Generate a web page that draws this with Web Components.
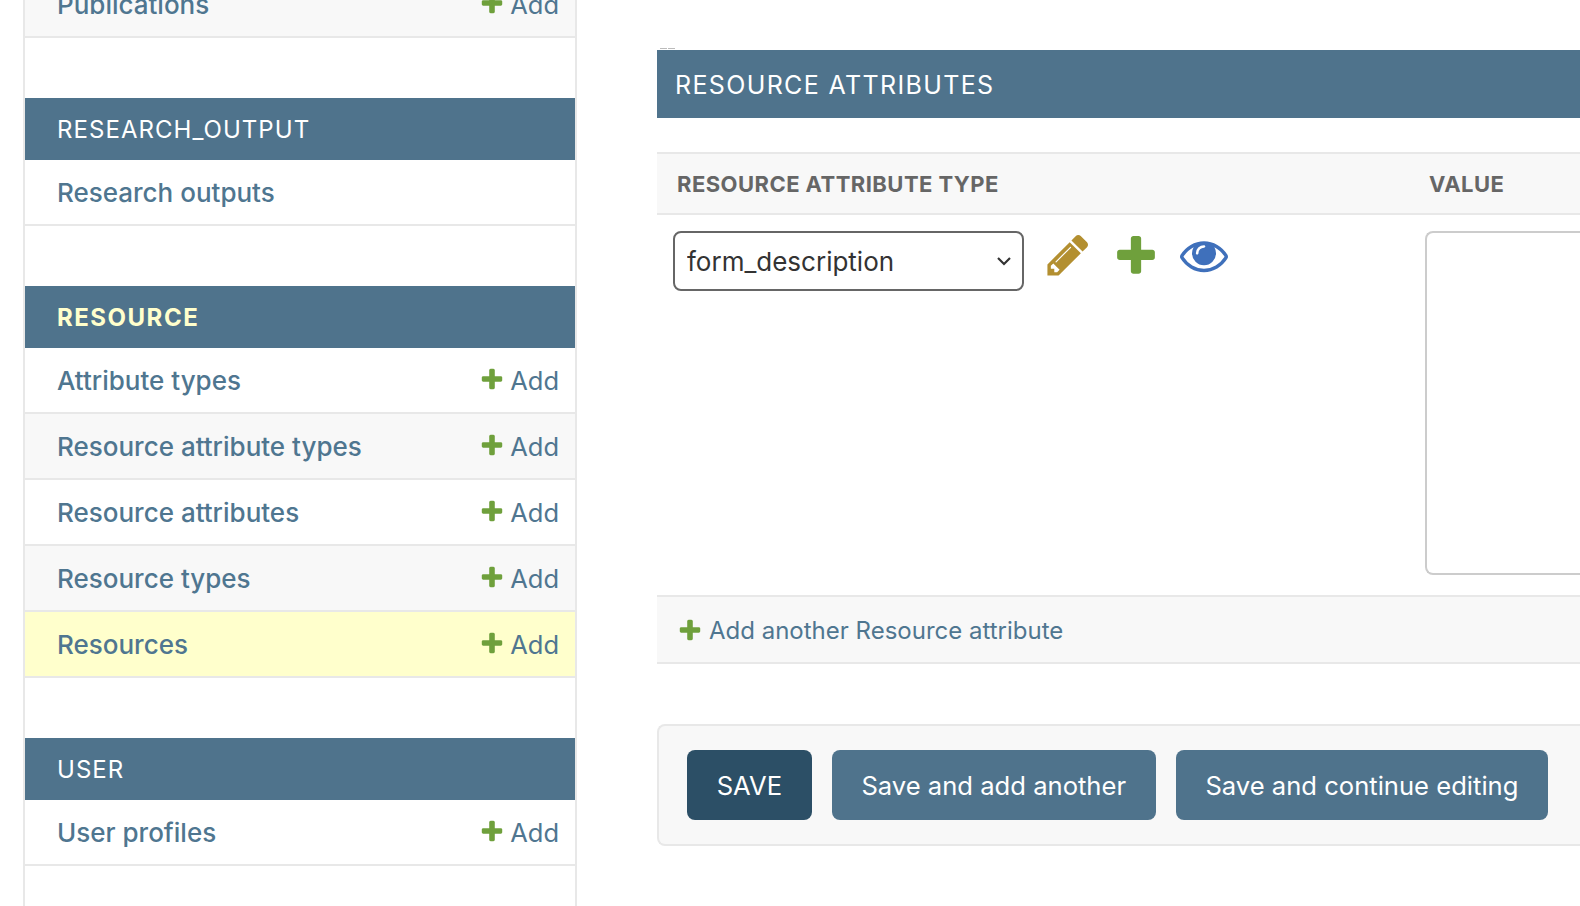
<!DOCTYPE html>
<html lang="en">
<head>
<meta charset="utf-8">
<title>Add resource</title>
<style>
  html, body { margin: 0; height: 906px; overflow: hidden; background: #fff; }
  body { font-family: Inter, "Liberation Sans", sans-serif; color: #333; }
</style>
</head>
<body>

<admin-page>
  <admin-sidebar slot="nav">
    <app-group clipped>
      <model-row name="Publications" add alt></model-row>
    </app-group>
    <app-group caption="RESEARCH_OUTPUT">
      <model-row name="Research outputs"></model-row>
    </app-group>
    <app-group caption="RESOURCE" current>
      <model-row name="Attribute types" add></model-row>
      <model-row name="Resource attribute types" add alt></model-row>
      <model-row name="Resource attributes" add></model-row>
      <model-row name="Resource types" add alt></model-row>
      <model-row name="Resources" add current></model-row>
    </app-group>
    <app-group caption="USER">
      <model-row name="User profiles" add></model-row>
    </app-group>
  </admin-sidebar>

  <inline-group caption="RESOURCE ATTRIBUTES" add-label="Add another Resource attribute">
    <attribute-row value="form_description"></attribute-row>
  </inline-group>

  <submit-row>
    <save-button primary>SAVE</save-button>
    <save-button>Save and add another</save-button>
    <save-button>Save and continue editing</save-button>
  </submit-row>
</admin-page>

<script>
const ICONS = {
  plus: 'M1600 796v192q0 40-28 68t-68 28h-416v416q0 40-28 68t-68 28h-192q-40 0-68-28t-28-68v-416h-416q-40 0-68-28t-28-68v-192q0-40 28-68t68-28h416v-416q0-40 28-68t68-28h192q40 0 68 28t28 68v416h416q40 0 68 28t28 68z',
  pencil: 'M491 1536l91-91-235-235-91 91v107h128v128h107zm523-928q0-22-22-22-10 0-17 7l-542 542q-7 7-7 17 0 22 22 22 10 0 17-7l542-542q7-7 7-17zm-54-192l416 416-832 832h-416v-416zm683 96q0 53-37 90l-166 166-416-416 166-165q36-38 90-38 53 0 91 38l235 234q37 39 37 91z',
  eye: 'M1664 960q-152-236-381-353 61 104 61 225 0 185-131.500 316.500t-316.500 131.500-316.500-131.500-131.500-316.500q0-121 61-225-229 117-381 353 133 205 333.500 326.500t434.500 121.500 434.500-121.500 333.500-326.500zm-720-384q0-20-14-34t-34-14q-125 0-214.500 89.500t-89.500 214.500q0 20 14 34t34 14 34-14 14-34q0-86 61-147t147-61q20 0 34-14t14-34zm848 384q0 34-20 69-140 230-376.500 368.500t-499.500 138.500-499.500-139-376.500-368q-20-35-20-69t20-69q140-229 376.500-368t499.500-139 499.500 139 376.500 368q20 35 20 69z'
};

const icon = (name, size, color) =>
  `<svg width="${size}" height="${size}" viewBox="0 0 1792 1792" style="display:block;flex:none"><path fill="${color}" d="${ICONS[name]}"/></svg>`;

class AdminPage extends HTMLElement {
  constructor() {
    super();
    this.attachShadow({ mode: 'open' }).innerHTML = `
      <style>
        :host { display: flex; height: 906px; overflow: hidden; padding-left: 23px; box-sizing: border-box; }
        .nav { flex: none; }
        .content { flex: 1; min-width: 0; margin-left: 80px; padding-top: 48px; }
      </style>
      <div class="nav"><slot name="nav"></slot></div>
      <div class="content"><slot></slot></div>
    `;
  }
}

class AdminSidebar extends HTMLElement {
  constructor() {
    super();
    this.attachShadow({ mode: 'open' }).innerHTML = `
      <style>
        :host { display: block; width: 550px; height: 934px; margin-top: -28px;
                border: solid #e8e8e8; border-width: 0 2px; }
      </style>
      <slot></slot>
    `;
  }
}

class AppGroup extends HTMLElement {
  constructor() {
    super();
    const cap = this.getAttribute('caption');
    const color = this.hasAttribute('current') ? '#ffffcc' : '#fff';
    const weight = this.hasAttribute('current') ? 700 : 400;
    const spacing = this.hasAttribute('current') ? 1.5 : 1.05;
    this.attachShadow({ mode: 'open' }).innerHTML = `
      <style>
        :host { display: block; margin-bottom: 60px; }
        .cap { height: 62px; box-sizing: border-box; padding: 0 32px; display: flex; align-items: center;
               background: #4f738c; color: ${color}; font-size: 24px; font-weight: ${weight}; letter-spacing: ${spacing}px; }
      </style>
      ${cap ? `<div class="cap">${cap}</div>` : ''}
      <slot></slot>
    `;
  }
}

class ModelRow extends HTMLElement {
  constructor() {
    super();
    const add = this.hasAttribute('add') ? `<span class="add">${icon('plus', 26, '#6fa03c')}<span>Add</span></span>` : '';
    this.attachShadow({ mode: 'open' }).innerHTML = `
      <style>
        :host { display: flex; align-items: center; justify-content: space-between; height: 66px; box-sizing: border-box;
                border-bottom: 2px solid #e8e8e8; padding: 1px 16px 0 32px;
                font-size: 26px; font-weight: 500; color: #4f7690; background: #fff; }
        :host([alt]) { background: #f8f8f8; }
        :host([current]) { background: #ffffcc; }
        .add { display: flex; align-items: center; gap: 5px; font-size: 25.5px; font-weight: 400; }
        svg { margin-top: -3px; }
      </style>
      <span class="name">${this.getAttribute('name')}</span>${add}
    `;
  }
}

class InlineGroup extends HTMLElement {
  constructor() {
    super();
    this.attachShadow({ mode: 'open' }).innerHTML = `
      <style>
        :host { display: block; }
        .marks { display: flex; gap: 1px; height: 1px; margin: 0 0 1px 3px; }
        .marks i { width: 7px; background: #bbb; }
        h2 { margin: 0; height: 68px; box-sizing: border-box; padding: 2px 18px 0; display: flex; align-items: center;
             background: #4f738c; color: #fff; font-size: 25px; font-weight: 400; letter-spacing: 1.36px; }
        .head { display: grid; grid-template-columns: 753px 1fr; height: 63px; margin-top: 34px; box-sizing: border-box;
                border: solid #e8e8e8; border-width: 2px 0; background: #f8f8f8;
                font-size: 22px; font-weight: 700; color: #666; align-items: center; }
        .head span { padding-left: 20px; letter-spacing: .45px; }
        .head span + span { padding-left: 19px; }
        .more { height: 69px; box-sizing: border-box; border: solid #e8e8e8; border-width: 2px 0; background: #f8f8f8;
                display: flex; align-items: center; gap: 6px; padding: 2px 0 0 20px; font-size: 24px; color: #4f7690; }
        .more svg { margin-top: -2px; }
      </style>
      <div class="marks"><i></i><i></i></div>
      <h2>${this.getAttribute('caption')}</h2>
      <div class="head"><span>RESOURCE ATTRIBUTE TYPE</span><span>VALUE</span></div>
      <slot></slot>
      <div class="more">${icon('plus', 26, '#6fa03c')}<span>${this.getAttribute('add-label')}</span></div>
    `;
  }
}

class AttributeRow extends HTMLElement {
  constructor() {
    super();
    const chevron = "url(\"data:image/svg+xml,%3Csvg xmlns='http://www.w3.org/2000/svg' width='16' height='10'%3E%3Cpath d='M2 2l6 6 6-6' fill='none' stroke='%23333' stroke-width='2.2'/%3E%3C/svg%3E\")";
    this.attachShadow({ mode: 'open' }).innerHTML = `
      <style>
        :host { display: grid; grid-template-columns: 753px 1fr; height: 380px; box-sizing: border-box; padding-top: 16px; }
        .type { display: flex; align-items: flex-start; gap: 20px; padding-left: 16px; }
        select { appearance: none; -webkit-appearance: none; width: 351px; height: 60px; box-sizing: border-box;
                 border: 2px solid #666; border-radius: 8px; padding: 1px 12px 0; margin: 0;
                 font: 400 26px Inter, "Liberation Sans", sans-serif; color: #333; background: #fff ${chevron} no-repeat right 10px center; }
        .links { display: flex; gap: 20px; }
        .value { padding-left: 15px; }
        .box { height: 344px; border: 2px solid #ccc; border-right: 0; border-radius: 8px 0 0 8px; box-sizing: border-box; }
      </style>
      <div class="type">
        <select><option>${this.getAttribute('value')}</option></select>
        <div class="links">${icon('pencil', 48, '#b38f30')}${icon('plus', 48, '#6fa03c')}${icon('eye', 48, '#3f70bb')}</div>
      </div>
      <div class="value"><div class="box"></div></div>
    `;
  }
}

class SubmitRow extends HTMLElement {
  constructor() {
    super();
    this.attachShadow({ mode: 'open' }).innerHTML = `
      <style>
        :host { display: flex; gap: 20px; height: 122px; box-sizing: border-box; margin-top: 60px; padding: 24px 28px;
                border: 2px solid #e8e8e8; border-right: 0; border-radius: 8px 0 0 8px; background: #f8f8f8; margin-right: -20px; }
      </style>
      <slot></slot>
    `;
  }
}

class SaveButton extends HTMLElement {
  constructor() {
    super();
    this.attachShadow({ mode: 'open' }).innerHTML = `
      <style>
        :host { display: flex; align-items: center; height: 70px; box-sizing: border-box; padding: 0 29.7px;
                border-radius: 8px; background: #4f738c; color: #fff; font-size: 25.6px; }
        :host([primary]) { background: #2c4f66; }
      </style>
      <slot></slot>
    `;
  }
}

customElements.define('admin-page', AdminPage);
customElements.define('admin-sidebar', AdminSidebar);
customElements.define('app-group', AppGroup);
customElements.define('model-row', ModelRow);
customElements.define('inline-group', InlineGroup);
customElements.define('attribute-row', AttributeRow);
customElements.define('submit-row', SubmitRow);
customElements.define('save-button', SaveButton);
</script>
</body>
</html>
